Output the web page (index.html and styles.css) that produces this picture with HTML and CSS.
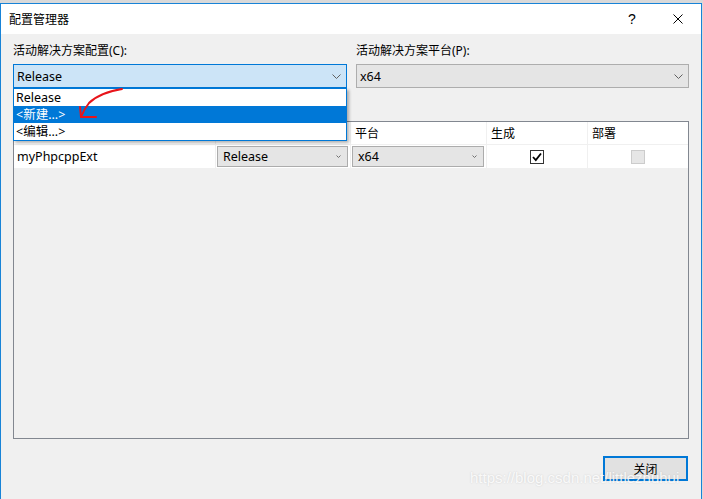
FILE: index.html
```html
<!DOCTYPE html>
<html lang="zh-CN">
<head>
    <meta charset="UTF-8">
    <meta name="viewport" content="width=device-width, initial-scale=1.0">
    <title>配置管理器</title>
    <link rel="stylesheet" href="styles.css">
</head>
<body>
    <div class="window">
        <div class="titlebar">
            <span class="title">配置管理器</span>
            <div class="caption-buttons">
                <span class="caption-btn help">?</span>
                <span class="caption-btn">
                    <svg width="10" height="10" viewBox="0 0 10 10"><path d="M0.5 0.5 L9.5 9.5 M9.5 0.5 L0.5 9.5" stroke="#000" stroke-width="1" fill="none"/></svg>
                </span>
            </div>
        </div>

        <div class="content">
            <div class="top-fields">
                <div class="field">
                    <label class="field-label">活动解决方案配置(C):</label>
                    <div class="combo-wrap">
                        <div class="combo combo-open">
                            <span>Release</span>
                            <svg class="chevron" width="9" height="5" viewBox="0 0 9 5"><path d="M0.5 0.5 L4.5 4.5 L8.5 0.5" stroke="#606060" fill="none"/></svg>
                        </div>
                        <ul class="dropdown">
                            <li>Release</li>
                            <li class="selected">&lt;新建...&gt;</li>
                            <li>&lt;编辑...&gt;</li>
                        </ul>
                    </div>
                </div>
                <div class="field">
                    <label class="field-label">活动解决方案平台(P):</label>
                    <div class="combo">
                        <span>x64</span>
                        <svg class="chevron" width="9" height="5" viewBox="0 0 9 5"><path d="M0.5 0.5 L4.5 4.5 L8.5 0.5" stroke="#606060" fill="none"/></svg>
                    </div>
                </div>
            </div>

            <div class="grid">
                <!-- first two header cells sit under the open dropdown -->
                <div class="grid-row grid-head">
                    <div class="cell"></div>
                    <div class="cell"></div>
                    <div class="cell">平台</div>
                    <div class="cell">生成</div>
                    <div class="cell">部署</div>
                </div>
                <div class="grid-row">
                    <div class="cell name">myPhpcppExt</div>
                    <div class="cell cell-combo">
                        <div class="mini-combo">
                            <span>Release</span>
                            <svg width="5" height="3" viewBox="0 0 5 3"><path d="M0.5 0.5 L2.5 2.5 L4.5 0.5" stroke="#707070" fill="none"/></svg>
                        </div>
                    </div>
                    <div class="cell cell-combo">
                        <div class="mini-combo">
                            <span>x64</span>
                            <svg width="5" height="3" viewBox="0 0 5 3"><path d="M0.5 0.5 L2.5 2.5 L4.5 0.5" stroke="#707070" fill="none"/></svg>
                        </div>
                    </div>
                    <div class="cell cell-check">
                        <span class="checkbox">
                            <svg width="12" height="12" viewBox="0 0 12 12"><path d="M2 6 L4.8 9 L10 2.5" stroke="#000" stroke-width="1.8" fill="none"/></svg>
                        </span>
                    </div>
                    <div class="cell cell-check">
                        <span class="checkbox disabled"></span>
                    </div>
                </div>
            </div>

            <div class="footer">
                <button class="close-button">关闭</button>
            </div>
        </div>
    </div>

    <!-- hand drawn annotation -->
    <svg class="annotation" width="703" height="499" viewBox="0 0 703 499">
        <path d="M122 89 C110 91 96 96 89 103 C85 108 83 112 81 117" stroke="#e8141a" stroke-width="2" fill="none" stroke-linecap="round"/>
        <path d="M80 107 L81 117 L96 117" stroke="#e8141a" stroke-width="2" fill="none" stroke-linecap="round" stroke-linejoin="round"/>
    </svg>

    <div class="watermark">https://blog.csdn.net/littlezhuhui</div>
</body>
</html>
```

FILE: styles.css
```css
body {
    margin: 0;
    padding-top: 3px;
    background-color: #d9d9d9;
    font-family: "Noto Sans", "Noto Sans CJK SC", sans-serif;
    font-size: 12.5px;
    color: #000;
    position: relative;
    width: 703px;
    height: 496px;
    overflow: hidden;
}
.window {
    width: 700px;
    height: 495px;
    border: 1px solid #1883d7;
    border-bottom: none;
    background-color: #f0f0f0;
    display: flex;
    flex-direction: column;
}
.titlebar {
    height: 30px;
    background-color: #fff;
    display: flex;
    align-items: center;
    justify-content: space-between;
    padding-left: 8px;
}
.title {
    font-size: 12px;
}
.caption-buttons {
    display: flex;
    height: 100%;
}
.caption-btn {
    width: 46px;
    display: flex;
    align-items: center;
    justify-content: center;
}
.help {
    font-size: 14px;
    font-family: "Liberation Sans", sans-serif;
    padding-left: 1px;
}

.content {
    padding: 8px 12px 0 12px;
    display: flex;
    flex-direction: column;
}
.top-fields {
    display: grid;
    grid-template-columns: 334px 333px;
    column-gap: 9px;
}
.field-label {
    display: block;
    line-height: 17px;
    margin-bottom: 5px;
    font-size: 12px;
}
.combo-wrap {
    position: relative;
}
.combo {
    height: 24px;
    box-sizing: border-box;
    border: 1px solid #adadad;
    background-color: #e5e5e5;
    display: flex;
    align-items: center;
    justify-content: space-between;
    padding: 0 5px 0 3px;
}
.combo-open {
    background-color: #cce4f7;
    border-color: #0078d7;
}
.dropdown {
    position: absolute;
    top: 24px;
    left: 0;
    width: 334px;
    box-sizing: border-box;
    margin: 0;
    padding: 0;
    list-style: none;
    background-color: #fff;
    border: 1px solid #0078d7;
    box-shadow: 2px 2px 3px rgba(0,0,0,0.3);
    z-index: 2;
}
.dropdown li {
    height: 17px;
    line-height: 17px;
    padding-left: 2px;
}
.dropdown li.selected {
    background-color: #0078d7;
    color: #fff;
}

.grid {
    margin-top: 33px;
    height: 318px;
    box-sizing: border-box;
    border: 1px solid #828790;
    background-color: #f0f0f0;
}
.grid-row {
    display: grid;
    grid-template-columns: 201px 134px 135px 100px 100px;
    column-gap: 1px;
    height: 23px;
}
.grid-head {
    height: 22px;
    margin-bottom: 1px;
}
.cell {
    background-color: #fff;
    display: flex;
    align-items: center;
    padding-left: 4px;
    font-size: 12px;
}
.cell.name {
    padding-left: 3px;
    font-size: 12.5px;
}
.cell-combo {
    padding: 1px 2px 1px 1px;
}
.mini-combo {
    flex: 1;
    height: 21px;
    box-sizing: border-box;
    border: 1px solid #acacac;
    background-color: #e5e5e5;
    display: flex;
    align-items: center;
    justify-content: space-between;
    padding: 0 6px 0 5px;
    font-size: 12.5px;
}
.cell-check {
    justify-content: center;
    padding-left: 0;
}
.checkbox {
    width: 14px;
    height: 14px;
    box-sizing: border-box;
    border: 1px solid #333;
    background-color: #fff;
    display: flex;
    align-items: center;
    justify-content: center;
}
.checkbox.disabled {
    border-color: #cccccc;
    background-color: #e6e6e6;
}

.footer {
    display: flex;
    justify-content: flex-end;
    margin-top: 17px;
    padding-right: 1px;
}
.close-button {
    width: 85px;
    height: 25px;
    border: 2px solid #0078d7;
    background-color: #e1e1e1;
    font-family: "Noto Sans CJK SC", sans-serif;
    font-size: 12px;
    padding: 0;
}

.annotation {
    position: absolute;
    top: 0;
    left: 0;
    pointer-events: none;
    z-index: 3;
}
.watermark {
    position: absolute;
    left: 470px;
    top: 469px;
    font-family: "Liberation Sans", sans-serif;
    font-size: 15px;
    color: rgba(255,255,255,0.85);
    text-shadow: 0 0 2px rgba(0,0,0,0.15);
    z-index: 3;
}
```
